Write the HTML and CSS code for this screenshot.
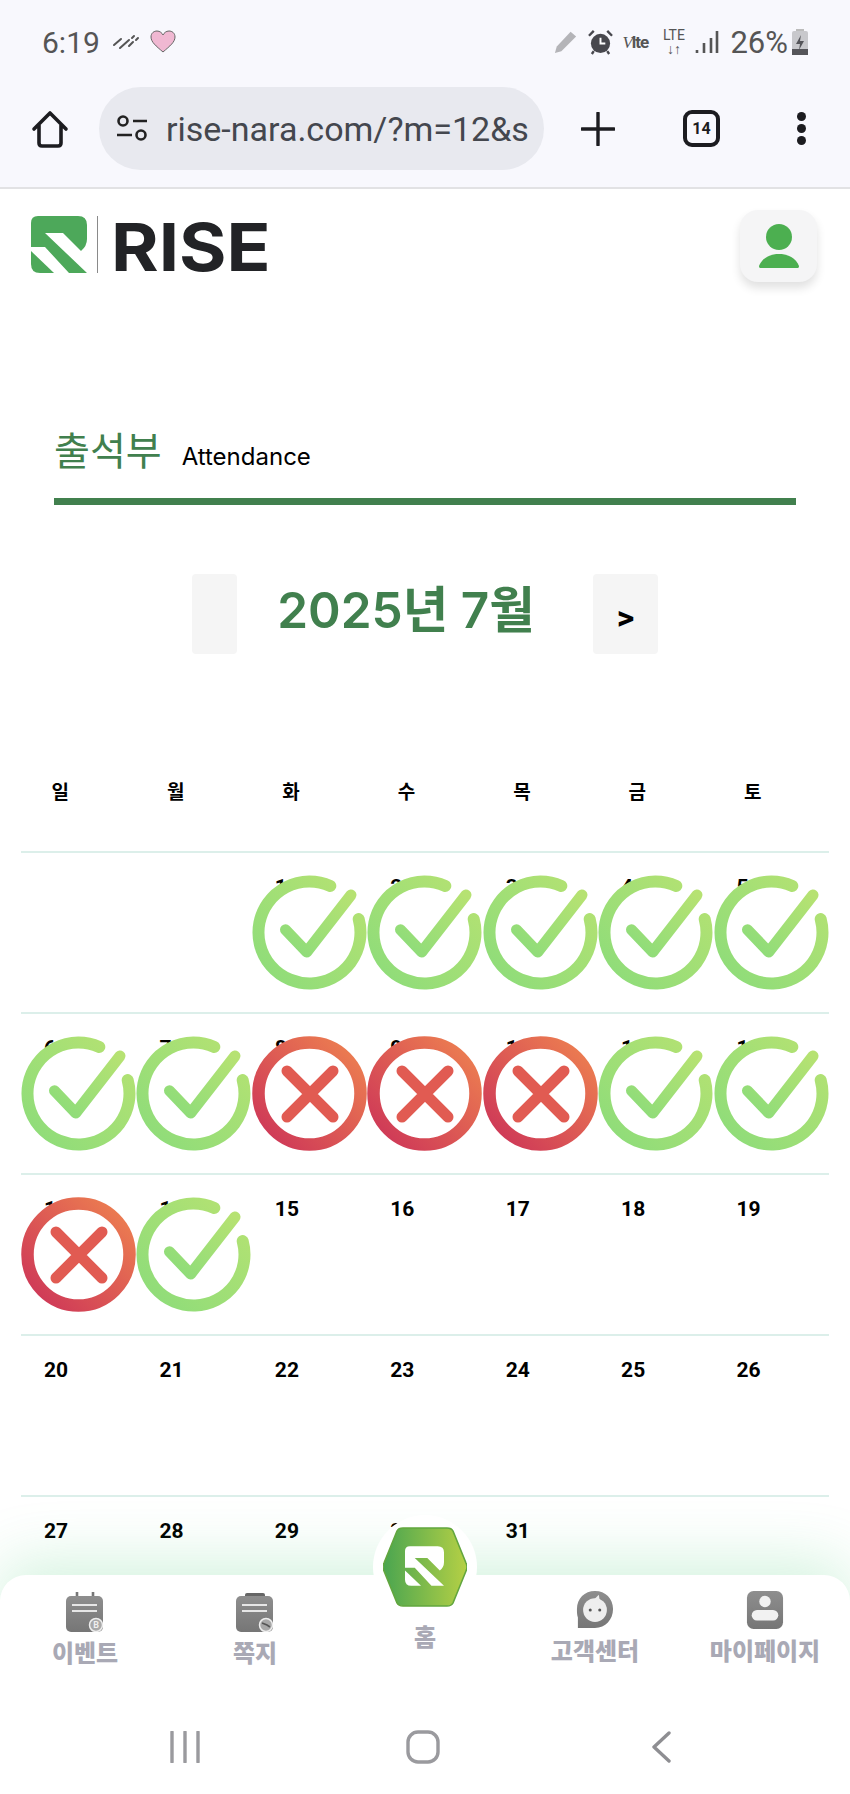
FILE: index.html
```html
<!DOCTYPE html>
<html>
<head>
  <title>RISE 출석부</title>
  <link rel="stylesheet" href="styles.css">
</head>
<body>
  <svg class="defs" width="0" height="0">
    <defs>
      <linearGradient id="green-grad" x1="0" y1="1" x2="1" y2="0">
        <stop offset="0" stop-color="#8cdc7a"/>
        <stop offset="1" stop-color="#b6e272"/>
      </linearGradient>
      <linearGradient id="red-grad" x1="0" y1="1" x2="1" y2="0">
        <stop offset="0" stop-color="#cc3358"/>
        <stop offset="1" stop-color="#ee8250"/>
      </linearGradient>
      <linearGradient id="hex-grad" x1="0" y1="0" x2="1" y2="0">
        <stop offset="0" stop-color="#4aa550"/>
        <stop offset="1" stop-color="#b5d045"/>
      </linearGradient>
      <linearGradient id="gray-grad" x1="0" y1="0" x2="0" y2="1">
        <stop offset="0" stop-color="#8e8e8e"/>
        <stop offset="1" stop-color="#767676"/>
      </linearGradient>
      <symbol id="mark-ok" viewBox="0 0 115 115">
        <circle cx="57.5" cy="57.5" r="51" fill="#fff"/>
        <path d="M78.3 10.9A51 51 0 1 0 106.7 44.1" fill="none" stroke="url(#green-grad)" stroke-width="12" stroke-linecap="round"/>
        <path d="M33.5 54.7L54.7 77L99 20" fill="none" stroke="url(#green-grad)" stroke-width="11" stroke-linecap="round" stroke-linejoin="round"/>
      </symbol>
      <symbol id="mark-no" viewBox="0 0 115 115">
        <circle cx="57.5" cy="57.5" r="51" fill="#fff" stroke="url(#red-grad)" stroke-width="12.5"/>
        <path d="M35 35L81 81M81 35L35 81" fill="none" stroke="#e15b52" stroke-width="11" stroke-linecap="round"/>
      </symbol>
      <symbol id="logo-r" viewBox="0 0 56 57">
        <path d="M7 0H47Q56 0 56 9V23Q56 30 50 35L32 17H14L56 57H38L14 31H0V7Q0 0 7 0Z" fill="currentColor"/>
        <path d="M0 35L23 57H9Q0 57 0 48Z" fill="currentColor"/>
      </symbol>
    </defs>
  </svg>

  <header class="phone-top">
    <div class="status-bar">
      <div class="status-left">
        <span class="clock">6:19</span>
        <svg class="ico-rain" viewBox="0 0 28 16"><path d="M2 11L9 5M8 14L17 6M17 12L21 8M20 4L22 2M24 6L26 4" stroke="#555" stroke-width="2" stroke-linecap="round" fill="none"/></svg>
        <svg class="ico-heart" viewBox="0 0 26 24"><path d="M13 22C6 16 1 12 1 7C1 3 4 1 7 1C10 1 12 3 13 5C14 3 16 1 19 1C22 1 25 3 25 7C25 12 20 16 13 22Z" fill="#f0b8d2" stroke="#666" stroke-width="1"/></svg>
      </div>
      <div class="status-right">
        <svg class="ico-pencil" viewBox="0 0 26 26"><path d="M1 25L3 18L18 2L24 7L8 23Z" fill="#b4b4b8"/></svg>
        <svg class="ico-alarm" viewBox="0 0 26 26"><circle cx="13" cy="14" r="10" fill="#48484e"/><path d="M13 8V14H18" stroke="#fff" stroke-width="2" fill="none"/><path d="M1 6L6 1M25 6L20 1M6 22L4 25M20 22L22 25" stroke="#48484e" stroke-width="2.5"/></svg>
        <span class="volte"><i>V</i>lte</span>
        <span class="lte">LTE<small>↓↑</small></span>
        <svg class="ico-signal" viewBox="0 0 24 24"><path d="M2 20V23M9 13V23M16 8V23M22 1V23" stroke="#555" stroke-width="2.6" fill="none"/></svg>
        <span class="batt-text">26%</span>
        <svg class="ico-batt" viewBox="0 0 18 26"><rect x="5" y="0" width="8" height="3" fill="#bbb"/><rect x="1" y="2" width="16" height="24" rx="2" fill="#c8c8cc"/><rect x="1" y="20" width="16" height="6" fill="#55555a"/><path d="M10 6L5 15H9L8 21L13 12H9Z" fill="#55555a"/></svg>
      </div>
    </div>
    <div class="toolbar">
      <svg class="ico-home" viewBox="0 0 38 38"><path d="M3 19L19 3L35 19M8 15V33C8 35 9 36 11 36H27C29 36 30 35 30 33V15" fill="none" stroke="#1c1c20" stroke-width="3.6" stroke-linejoin="round" stroke-linecap="round"/></svg>
      <div class="url-pill">
        <svg class="ico-tune" viewBox="0 0 32 28"><circle cx="7" cy="6" r="4.5" fill="none" stroke="#222" stroke-width="2.6"/><path d="M17 6H31M1 20H16" stroke="#222" stroke-width="2.6"/><circle cx="25" cy="20" r="4.5" fill="none" stroke="#222" stroke-width="2.6"/></svg>
        <span class="url-text">rise-nara.com/?m=12&amp;s</span>
      </div>
      <svg class="ico-plus" viewBox="0 0 34 34"><path d="M17 1V33M1 17H33" stroke="#1c1c20" stroke-width="3.4" stroke-linecap="round"/></svg>
      <div class="tab-count">14</div>
      <div class="more-dots"><span></span><span></span><span></span></div>
    </div>
  </header>

  <div class="site-head">
    <div class="logo">
      <svg class="logo-mark"><use href="#logo-r"/></svg>
      <span class="logo-line"></span>
      <span class="logo-text">RISE</span>
    </div>
    <div class="profile-btn">
      <svg viewBox="0 0 40 44" width="40" height="44"><circle cx="20" cy="13" r="13" fill="#4caf50"/><path d="M0 42C3 34 11 30 20 30C29 30 37 34 40 42C40 44 39 44 38 44H2C1 44 0 44 0 42Z" fill="#4caf50"/></svg>
    </div>
  </div>

  <div class="page-title">
    <h2>출석부</h2>
    <span>Attendance</span>
  </div>

  <div class="month-nav">
    <button class="month-btn prev"></button>
    <div class="month-label">2025년 7월</div>
    <button class="month-btn next">&gt;</button>
  </div>

  <table class="calendar">
    <thead>
      <tr><th>일</th><th>월</th><th>화</th><th>수</th><th>목</th><th>금</th><th>토</th></tr>
    </thead>
    <tbody>
      <tr>
        <td></td><td></td>
        <td>1<svg class="mark"><use href="#mark-ok"/></svg></td>
        <td>2<svg class="mark"><use href="#mark-ok"/></svg></td>
        <td>3<svg class="mark"><use href="#mark-ok"/></svg></td>
        <td>4<svg class="mark"><use href="#mark-ok"/></svg></td>
        <td>5<svg class="mark"><use href="#mark-ok"/></svg></td>
      </tr>
      <tr>
        <td>6<svg class="mark"><use href="#mark-ok"/></svg></td>
        <td>7<svg class="mark"><use href="#mark-ok"/></svg></td>
        <td>8<svg class="mark"><use href="#mark-no"/></svg></td>
        <td>9<svg class="mark"><use href="#mark-no"/></svg></td>
        <td>10<svg class="mark"><use href="#mark-no"/></svg></td>
        <td>11<svg class="mark"><use href="#mark-ok"/></svg></td>
        <td>12<svg class="mark"><use href="#mark-ok"/></svg></td>
      </tr>
      <tr>
        <td>13<svg class="mark"><use href="#mark-no"/></svg></td>
        <td>14<svg class="mark"><use href="#mark-ok"/></svg></td>
        <td>15</td><td>16</td><td>17</td><td>18</td><td>19</td>
      </tr>
      <tr>
        <td>20</td><td>21</td><td>22</td><td>23</td><td>24</td><td>25</td><td>26</td>
      </tr>
      <tr>
        <td>27</td><td>28</td><td>29</td><td>30</td><td>31</td><td></td><td></td>
      </tr>
    </tbody>
  </table>

  <div class="bottom-wrap">
    <nav class="bottom-nav">
      <a class="nav-item low">
        <svg class="nav-ico" viewBox="0 0 38 40"><path d="M11 0V8M27 0V8" stroke="#777" stroke-width="2.6"/><rect x="0" y="4" width="37" height="36" rx="5" fill="url(#gray-grad)"/><path d="M6 13H31M6 19H31" stroke="#e6e6e6" stroke-width="2"/><circle cx="30" cy="33" r="6.5" fill="#a8a8a8" stroke="#eee" stroke-width="1.5"/><text class="badge-text" x="30" y="36">B</text></svg>
        <span>이벤트</span>
      </a>
      <a class="nav-item low">
        <svg class="nav-ico" viewBox="0 0 38 40"><rect x="9" y="1" width="20" height="6" rx="2" fill="#666"/><rect x="0" y="4" width="37" height="36" rx="5" fill="url(#gray-grad)"/><path d="M6 13H31M6 19H31" stroke="#e6e6e6" stroke-width="2"/><circle cx="30" cy="33" r="6.5" fill="#a8a8a8" stroke="#eee" stroke-width="1.5"/><path d="M26 31L31 33L34 35" stroke="#555" stroke-width="1.6" fill="none"/></svg>
        <span>쪽지</span>
      </a>
      <a class="nav-item home">
        <div class="home-disc">
          <svg viewBox="0 0 84 80" width="84" height="80">
            <path d="M20 1H64C67 1 69 2 70 4L83 36C84 38 84 42 83 44L70 76C69 78 67 79 64 79H20C17 79 15 78 14 76L1 44C0 42 0 38 1 36L14 4C15 2 17 1 20 1Z" fill="url(#hex-grad)" stroke="#62a63e" stroke-width="1.6"/>
            <use class="hex-r" href="#logo-r" x="22" y="19" width="39" height="40"/>
          </svg>
        </div>
        <span>홈</span>
      </a>
      <a class="nav-item">
        <svg class="nav-ico" viewBox="0 0 40 40"><path d="M20 0C31 0 39 8 39 19C39 30 31 39 20 39H2V28C1 25 1 22 1 19C1 8 9 0 20 0Z" fill="url(#gray-grad)"/><circle cx="20" cy="20" r="12.5" fill="#eee"/><path d="M19 9L24 4L25 10Z" fill="#eee"/><circle cx="15" cy="20" r="1.6" fill="#555"/><circle cx="25" cy="20" r="1.6" fill="#555"/></svg>
        <span>고객센터</span>
      </a>
      <a class="nav-item">
        <svg class="nav-ico" viewBox="0 0 40 40"><rect width="38" height="40" x="1" rx="7" fill="url(#gray-grad)"/><circle cx="20" cy="11" r="6" fill="#f2f2f2"/><rect x="6" y="20" width="28" height="11" rx="5.5" fill="#f2f2f2"/></svg>
        <span>마이페이지</span>
      </a>
    </nav>
    <div class="android-nav">
      <svg class="sys-recent" viewBox="0 0 32 32"><path d="M3 1V31M16 1V31M29 1V31" stroke="#9a9a9e" stroke-width="3.4" stroke-linecap="round"/></svg>
      <svg class="sys-home" viewBox="0 0 34 34"><rect x="2" y="2" width="30" height="30" rx="10" fill="none" stroke="#9a9a9e" stroke-width="3.4"/></svg>
      <svg class="sys-back" viewBox="0 0 20 32"><path d="M18 2L3 16L18 30" fill="none" stroke="#8e8e92" stroke-width="3.4" stroke-linecap="round" stroke-linejoin="round"/></svg>
    </div>
  </div>
</body>
</html>
```
FILE: styles.css
```css
* {
  box-sizing: border-box;
}

html, body {
  margin: 0;
  padding: 0;
}

body {
  width: 850px;
  height: 1794px;
  overflow: hidden;
  position: relative;
  background: #fff;
  font-family: "Noto Sans CJK KR", Roboto, sans-serif;
}

.defs {
  position: absolute;
}

/* phone chrome */
.phone-top {
  height: 189px;
  background: #f8f8fd;
  border-bottom: 2px solid #e2e2e4;
}

.status-bar {
  height: 87px;
  padding: 18px 41px 0 42px;
  display: flex;
  justify-content: space-between;
  align-items: flex-start;
  color: #555;
}

.status-left, .status-right {
  display: flex;
  align-items: center;
  height: 48px;
  font-family: Roboto, sans-serif;
}

.clock {
  font-size: 30px;
}

.ico-rain {
  width: 28px;
  height: 16px;
  margin-left: 12px;
}

.ico-heart {
  width: 26px;
  height: 24px;
  margin-left: 10px;
}

.ico-pencil {
  width: 24px;
  height: 24px;
}

.ico-alarm {
  width: 25px;
  height: 25px;
  margin-left: 10px;
}

.volte {
  width: 33px;
  font-size: 17px;
  font-weight: 700;
  margin-left: 9px;
  letter-spacing: -1px;
}

.volte i {
  font-weight: 400;
  font-family: "Liberation Serif", serif;
}

.lte {
  width: 25px;
  font-size: 14px;
  line-height: 14px;
  margin-left: 6px;
  display: flex;
  flex-direction: column;
  align-items: center;
}

.lte small {
  font-size: 14px;
  line-height: 14px;
  font-weight: 700;
}

.ico-signal {
  width: 24px;
  height: 24px;
  margin-left: 9px;
}

.batt-text {
  font-size: 31px;
  margin-left: 11px;
}

.ico-batt {
  width: 18px;
  height: 26px;
  margin-left: 3px;
}

.toolbar {
  height: 83px;
  display: flex;
  align-items: center;
  padding-left: 31px;
}

.ico-home {
  width: 38px;
  height: 38px;
  flex: none;
}

.url-pill {
  width: 445px;
  height: 83px;
  margin-left: 30px;
  border-radius: 42px;
  background: #e8e9ef;
  display: flex;
  align-items: center;
  padding: 0 16px 0 17px;
  flex: none;
}

.ico-tune {
  width: 32px;
  height: 28px;
  flex: none;
}

.url-text {
  margin-left: 18px;
  font-family: Roboto, sans-serif;
  font-size: 34px;
  color: #44474e;
  white-space: nowrap;
  overflow: hidden;
}

.ico-plus {
  width: 34px;
  height: 34px;
  margin-left: 37px;
  flex: none;
}

.tab-count {
  width: 37px;
  height: 37px;
  margin-left: 68px;
  border: 4px solid #1c1c20;
  border-radius: 9px;
  font-family: Roboto, sans-serif;
  font-size: 16px;
  font-weight: 700;
  color: #1c1c20;
  display: flex;
  align-items: center;
  justify-content: center;
  flex: none;
}

.more-dots {
  margin-left: 77px;
  display: flex;
  flex-direction: column;
  gap: 3px;
}

.more-dots span {
  width: 9px;
  height: 9px;
  border-radius: 50%;
  background: #1c1c20;
}

/* site header */
.site-head {
  height: 93px;
  padding: 21px 33px 0 31px;
  display: flex;
  justify-content: space-between;
  align-items: flex-start;
}

.logo {
  margin-top: 6px;
  display: flex;
  align-items: center;
  height: 57px;
}

.logo-mark {
  width: 56px;
  height: 57px;
  color: #4da85a;
}

.logo-line {
  width: 1px;
  height: 57px;
  margin-left: 10px;
  background: #8a8a8a;
}

.logo-text {
  margin: 5px 0 0 13px;
  font-family: Inter, sans-serif;
  font-size: 66px;
  line-height: 57px;
  font-weight: 700;
  color: #222326;
  transform: scaleX(1.1);
  transform-origin: left center;
}

.profile-btn {
  width: 77px;
  height: 72px;
  border-radius: 18px;
  background: #f5f5f6;
  box-shadow: 0 6px 10px rgba(0, 0, 0, .12);
  display: flex;
  align-items: center;
  justify-content: center;
}

/* title */
.page-title {
  margin: 0 54px;
  height: 223px;
  padding-top: 141px;
  border-bottom: 7px solid #41804e;
  display: flex;
  align-items: baseline;
  gap: 20px;
}

.page-title h2 {
  margin: 0;
  font-size: 39px;
  line-height: 50px;
  font-weight: 400;
  color: #41804e;
}

.page-title span {
  font-family: Inter, sans-serif;
  font-size: 24px;
  color: #000;
}

.month-nav {
  margin-top: 69px;
  display: flex;
  align-items: center;
  justify-content: center;
  height: 80px;
}

.month-btn {
  height: 80px;
  border: none;
  border-radius: 4px;
  background: #f5f5f5;
  font-family: Roboto, sans-serif;
  font-size: 34px;
  font-weight: 700;
  color: #000;
  padding: 6px 0 0;
}

.month-btn.prev {
  width: 45px;
}

.month-btn.next {
  width: 65px;
}

.month-label {
  width: 356px;
  margin-top: -16px;
  padding-right: 18px;
  text-align: center;
  font-family: Inter, "Noto Sans CJK KR", sans-serif;
  font-size: 49.5px;
  font-weight: 600;
  color: #41804e;
}

/* calendar */
.calendar {
  margin: 73px 0 0 21px;
  width: 808px;
  table-layout: fixed;
  border-collapse: collapse;
}

.calendar th {
  height: 125px;
  padding: 3px 37px 0 0;
  font-size: 19px;
  font-weight: 700;
  color: #000;
  text-align: center;
}

.calendar td {
  height: 161px;
  position: relative;
  vertical-align: top;
  padding: 22px 0 0 23px;
  border-top: 2px solid #dcefea;
  font-family: Roboto, sans-serif;
  font-size: 21px;
  font-weight: 700;
  color: #000;
}

.mark {
  position: absolute;
  left: 0;
  top: 22px;
  width: 115px;
  height: 115px;
}

/* bottom nav */
.bottom-wrap {
  position: absolute;
  left: 0;
  right: 0;
  bottom: 0;
  height: 219px;
  border-radius: 26px 26px 0 0;
  background: #fff;
  box-shadow: 0 -14px 60px rgba(60, 200, 110, .22);
}

.bottom-nav {
  display: grid;
  grid-template-columns: repeat(5, 1fr);
  height: 120px;
}

.nav-item {
  display: flex;
  flex-direction: column;
  align-items: center;
  padding-top: 15px;
  font-size: 24px;
  font-weight: 900;
  color: #a9a9b5;
  position: relative;
}

.nav-item span {
  line-height: 30px;
  margin-top: 5px;
}

.nav-item.low {
  padding-top: 17px;
}

.nav-item.low span {
  margin-top: 5px;
}

.nav-ico {
  width: 38px;
  height: 40px;
}

.badge-text {
  font-family: Roboto, sans-serif;
  font-size: 9px;
  font-weight: 700;
  fill: #eee;
  text-anchor: middle;
}

.nav-item.home {
  padding-top: 46px;
}

.nav-item.home span {
  margin-top: 0;
}

.hex-r {
  color: #fff;
}

.home-disc {
  position: absolute;
  left: 33px;
  top: -60px;
  width: 104px;
  height: 104px;
  border-radius: 50%;
  background: #fff;
  display: flex;
  align-items: center;
  justify-content: center;
}

.android-nav {
  position: relative;
  height: 99px;
}

.sys-recent {
  position: absolute;
  left: 169px;
  top: 36px;
  width: 32px;
  height: 32px;
}

.sys-home {
  position: absolute;
  left: 406px;
  top: 35px;
  width: 34px;
  height: 34px;
}

.sys-back {
  position: absolute;
  left: 651px;
  top: 36px;
  width: 20px;
  height: 32px;
}
```
